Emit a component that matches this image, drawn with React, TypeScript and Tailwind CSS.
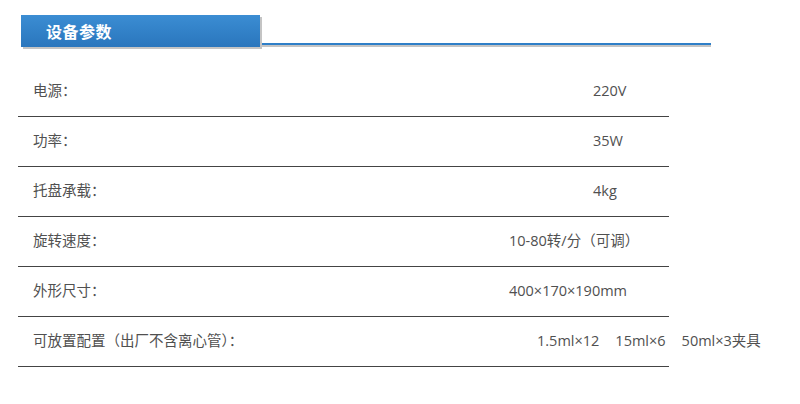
import React from "react";

const rows: { label: string; value: React.ReactNode; pad: string }[] = [
  { label: "电源：", value: "220V", pad: "pl-[84px]" },
  { label: "功率：", value: "35W", pad: "pl-[84px]" },
  { label: "托盘承载：", value: "4kg", pad: "pl-[84px]" },
  { label: "旋转速度：", value: "10-80转/分（可调）", pad: "pl-0" },
  { label: "外形尺寸：", value: "400×170×190mm", pad: "pl-0" },
  {
    label: "可放置配置（出厂不含离心管）：",
    value: (
      <>
        <span>1.5ml×12</span>
        <span className="ml-[16px]">15ml×6</span>
        <span className="ml-[16px]">50ml×3夹具</span>
      </>
    ),
    pad: "pl-[28px]",
  },
];

export default function App() {
  return (
    <div
      className="w-[800px] h-[404px] bg-white overflow-hidden"
      style={{ fontFamily: '"Open Sans", "Noto Sans CJK SC", sans-serif' }}
    >
      {/* header */}
      <div className="pt-[15px] pl-[21px] flex items-end">
        <div className="relative w-[239px] h-[32px] bg-gradient-to-b from-[#3b8dd3] to-[#2a76bd] shadow-[2px_2px_0_#c4c4c4] flex items-center pl-[25px] z-10">
          <span
            className="text-white font-bold text-[16px] leading-none tracking-[0.5px]"
            style={{ fontFamily: '"Noto Sans CJK SC", sans-serif' }}
          >
            设备参数
          </span>
        </div>
        <div className="w-[451px] flex flex-col">
          <div className="h-[2px] bg-[#2f7fc8]" />
          <div className="h-[2px] bg-[#c4c4c4]" />
        </div>
      </div>

      {/* table */}
      <div className="mt-[20px] ml-[18px] w-[651px]">
        {rows.map((r, i) => (
          <div
            key={i}
            className="h-[50px] border-b border-[#444] flex items-center text-[14.5px] text-[#505050] whitespace-nowrap"
          >
            <div className="w-[491px] pl-[15px] shrink-0 -mt-[2px]">{r.label}</div>
            <div className={`${r.pad} flex -mt-[2px]`}>{r.value}</div>
          </div>
        ))}
      </div>
    </div>
  );
}
